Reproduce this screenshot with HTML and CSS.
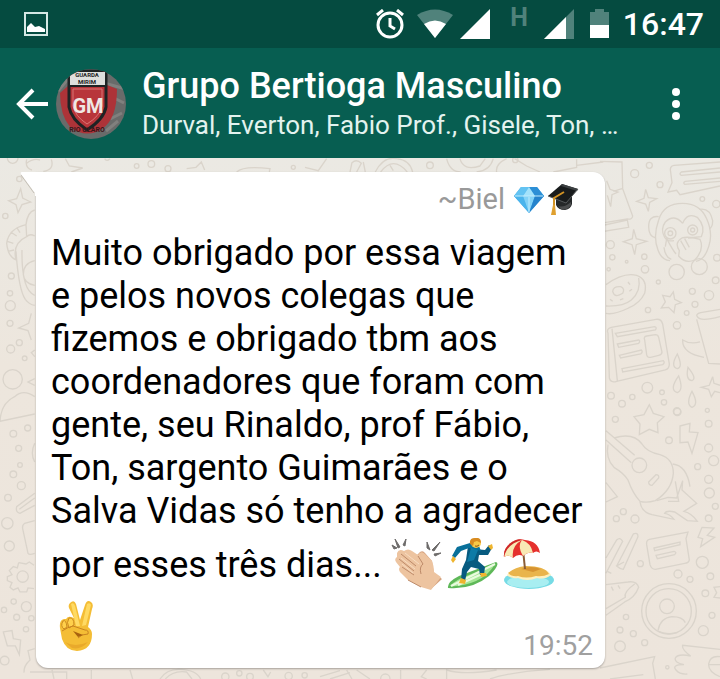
FILE: index.html
```html
<!DOCTYPE html>
<html lang="pt-BR">
<head>
    <meta charset="UTF-8">
    <meta name="viewport" content="width=device-width, initial-scale=1.0">
    <title>Grupo Bertioga Masculino</title>
    <link rel="stylesheet" href="styles.css">
</head>
<body>
    <div class="status-bar">
        <svg class="picture-icon" width="24" height="24" viewBox="0 0 24 24">
            <rect x="1" y="1" width="22" height="22" fill="none" stroke="#d5e8e4" stroke-width="2"/>
            <path d="M3 20V15L7 11L11 15L15 14L21 17V20Z" fill="#fff"/>
        </svg>
        <div class="status-icons">
            <svg width="28" height="30" viewBox="0 0 28 30">
                <circle cx="14" cy="16" r="12" fill="none" stroke="#fff" stroke-width="3"/>
                <path d="M14 9V17L19 20M1 6L7 1M27 6L21 1" fill="none" stroke="#fff" stroke-width="3"/>
            </svg>
            <svg class="wifi" width="36" height="30" viewBox="0 0 36 30">
                <path d="M18 29L0 6Q18-5 36 6Z" fill="#50827b"/>
                <path d="M18 29L7 15Q18 8 29 15Z" fill="#fff"/>
            </svg>
            <svg class="signal" width="30" height="30" viewBox="0 0 30 30">
                <path d="M0 30L30 0V30Z" fill="#fff"/>
            </svg>
            <span class="network">H</span>
            <svg class="signal-two" width="30" height="30" viewBox="0 0 30 30">
                <path d="M0 30L30 0V30Z" fill="#50827b"/>
                <path d="M0 30L22 8V30Z" fill="#fff"/>
            </svg>
            <svg class="battery" width="19" height="30" viewBox="0 0 19 30">
                <path d="M0 3H5V0H14V3H19V17H0Z" fill="#50827b"/>
                <path d="M0 16H19V29H0Z" fill="#fff"/>
            </svg>
            <span class="clock">16:47</span>
        </div>
    </div>

    <header class="chat-header">
        <button class="back-btn" aria-label="Voltar">
            <svg width="32" height="32" viewBox="0 0 32 32">
                <path d="M32 16H3M17 2L3 16L17 30" fill="none" stroke="#fff" stroke-width="4"/>
            </svg>
        </button>
        <svg class="avatar" width="70" height="70" viewBox="0 0 70 70">
            <defs>
                <clipPath id="avatarClip"><circle cx="35" cy="35" r="35"/></clipPath>
            </defs>
            <g clip-path="url(#avatarClip)">
                <rect width="70" height="70" fill="#696b6a"/>
                <path d="M48 14L70 20M52 26L68 34M54 50L66 44M2 22L12 10M50 62L62 52" stroke="#80807e" stroke-width="3"/>
                <path d="M4 24L13 16V38L30 61L51 38V16L61 20Q61 50 46 60Q30 70 14 58Q4 46 4 24Z" fill="#ad3338"/>
                <path d="M13 2H50V38Q48 50 31 61Q15 50 13 38Z" fill="#b8353a" stroke="#1e2324" stroke-width="3"/>
                <path d="M14 3H49V16H14Z" fill="#dedfdd"/>
                <path d="M13 17H50" stroke="#1e2324" stroke-width="2"/>
                <path d="M17 20H46V37Q44 47 31 55Q19 47 17 37Z" fill="none" stroke="#d97574" stroke-width="1"/>
                <text class="crest-top" x="31" y="8">GUARDA</text>
                <text class="crest-top" x="31" y="15">MIRIM</text>
                <text class="crest-main" x="32" y="44">GM</text>
                <text class="crest-bottom" x="31" y="63">RIO CLARO</text>
            </g>
        </svg>
        <div class="chat-title">
            <h1>Grupo Bertioga Masculino</h1>
            <p>Durval, Everton, Fabio Prof., Gisele, Ton, …</p>
        </div>
        <button class="menu-btn" aria-label="Mais opções">
            <svg width="8" height="32" viewBox="0 0 8 32">
                <circle cx="4" cy="4" r="4" fill="#fff"/>
                <circle cx="4" cy="16" r="4" fill="#fff"/>
                <circle cx="4" cy="28" r="4" fill="#fff"/>
            </svg>
        </button>
    </header>

    <main class="chat">
        <svg class="wallpaper" viewBox="0 158 720 521" preserveAspectRatio="xMaxYMin slice" aria-hidden="true">
            <!-- right side, upper half -->
            <g transform="translate(600 150) scale(0.3333)">
                <path d="M0 34L66 36L68 116L98 198Q96 210 82 207L0 220M20 92L30 118L54 126L36 134L32 170L22 136M0 228L82 210L86 232L0 246M66 116L40 124"/>
                <circle cx="148" cy="46" r="9"/><circle cx="104" cy="71" r="12"/><circle cx="180" cy="104" r="9"/>
                <circle cx="307" cy="147" r="7"/><circle cx="349" cy="162" r="11"/>
                <path d="M360 36L222 46Q208 48 212 66L216 98L204 126L230 121L240 134L360 108M360 54L244 66Q236 72 244 76L360 66M360 84L256 94Q248 98 254 103L360 94"/>
                <path d="M137 118L145 143L170 146L149 157L145 184L137 162L110 154L132 145Z"/>
                <path d="M101 238L109 266L140 274L109 284L104 314L96 284L70 275L97 266Z"/>
                <circle cx="31" cy="284" r="12"/><circle cx="37" cy="322" r="8"/><circle cx="133" cy="320" r="8"/><circle cx="135" cy="358" r="11"/>
                <circle cx="80" cy="335" r="4"/><circle cx="26" cy="358" r="5"/><circle cx="175" cy="396" r="6"/>
                <!-- monkey -->
                <path d="M176 210Q190 160 248 160Q300 160 320 206Q340 250 326 290Q314 330 288 334M176 210Q158 260 174 300Q184 330 210 332"/>
                <path d="M176 200Q146 196 146 230Q146 260 168 264M298 178Q330 172 338 212Q338 232 328 236"/>
                <path d="M248 220Q222 190 196 216Q180 238 194 262Q204 276 222 272M248 220Q262 186 292 202Q318 230 304 260L264 264"/>
                <circle cx="211" cy="250" r="17"/><circle cx="211" cy="250" r="7"/><circle cx="278" cy="240" r="15"/><circle cx="278" cy="240" r="6"/>
                <path d="M196 290L200 266Q218 300 228 312M238 302Q222 278 246 264Q264 258 300 268Q314 300 284 330Q256 342 236 318ZM242 272L258 300M254 266L268 292M192 292Q194 320 214 328"/>
                <circle cx="230" cy="366" r="23"/><circle cx="298" cy="350" r="24"/>
                <!-- donut -->
                <path d="M18 404Q70 366 110 376Q144 388 134 430Q120 460 86 474Q40 496 18 490M18 468Q70 470 94 450Q124 424 116 384M38 424Q40 408 62 410Q76 416 68 430Q44 446 38 424ZM84 396L90 404M96 418L88 424M70 446L60 450M30 448L38 454"/>
                <path d="M220 426L224 448L244 458L226 464L222 488L206 472L184 474L196 456L188 436L210 440Z"/>
                <circle cx="277" cy="424" r="9"/><circle cx="327" cy="436" r="14"/><circle cx="285" cy="463" r="9"/><circle cx="260" cy="489" r="7"/><circle cx="144" cy="480" r="8"/><circle cx="231" cy="526" r="11"/><circle cx="351" cy="323" r="10"/><circle cx="347" cy="391" r="10"/>
                <!-- newspaper -->
                <path d="M24 550Q18 536 34 532L168 508Q184 506 188 522L208 642Q208 656 196 660L50 694Q32 700 28 684ZM36 536L52 692M46 550L164 530Q172 532 166 540L52 560ZM52 582L116 570Q122 572 116 580L56 592ZM58 616L124 600Q130 606 122 612L62 624ZM66 656L190 632Q196 638 188 644L68 666ZM134 570Q130 560 140 558L166 554Q174 554 176 562L186 606Q186 614 176 616L152 622Q142 624 140 614Z"/>
                <path d="M292 500Q286 492 302 488L360 478M292 500Q300 516 360 500M290 508L326 640L360 642M300 576Q270 584 248 570Q246 610 312 622"/>
                <path d="M232 612Q210 650 232 656Q250 652 232 612ZM264 652Q256 690 276 692Q292 686 264 652ZM236 678Q206 720 232 728Q252 720 236 678ZM276 724Q256 762 276 772Q298 764 276 724Z"/>
                <path d="M338 680L342 700L360 706M338 680L328 706L304 712L326 718L334 740L344 724L360 728"/>
                <circle cx="142" cy="713" r="16"/><circle cx="186" cy="727" r="7"/><circle cx="33" cy="737" r="10"/><circle cx="97" cy="741" r="8"/><circle cx="66" cy="761" r="10"/><circle cx="192" cy="757" r="8"/><circle cx="231" cy="784" r="11"/><circle cx="322" cy="781" r="6"/>
            </g>
            <!-- right side, lower half -->
            <g transform="translate(600 410) scale(0.3333)">
                <path d="M148-16L160 10L192 20L172 38L174 68L148 58L118 74L120 42L102 20L132 14Z"/>
                <path d="M240 48L270 40L268 66L294 68L276 130L264 96L240 98Z"/>
                <circle cx="46" cy="28" r="9"/><circle cx="232" cy="6" r="11"/><circle cx="207" cy="91" r="10"/><circle cx="326" cy="41" r="10"/><circle cx="326" cy="114" r="12"/><circle cx="341" cy="152" r="15"/><circle cx="293" cy="170" r="9"/><circle cx="326" cy="208" r="12"/><circle cx="328" cy="249" r="15"/><circle cx="346" cy="289" r="9"/><circle cx="326" cy="325" r="10"/>
                <!-- guitar -->
                <path d="M18 62L104 136M18 90L94 158M42 84Q100 66 126 102Q140 126 180 134Q220 146 220 190Q216 240 166 272Q140 280 120 274Q98 250 84 210Q72 190 42 172Q16 146 24 104M146 216L168 194Q178 194 176 204L156 226Q146 226 146 216Z"/>
                <circle cx="118" cy="166" r="22"/>
                <path d="M218 162Q260 166 270 230M120 276Q124 306 156 314L222 328Q210 312 194 310Q200 300 224 306L262 332L292 334Q276 310 252 304L290 280L246 240L248 212L230 264L204 262L170 272M226 214L236 274L204 274"/>
                <path d="M18 218L52 260L18 276"/>
                <circle cx="70" cy="305" r="9"/><circle cx="49" cy="326" r="9"/><circle cx="105" cy="327" r="12"/>
                <path d="M18 490L68 394Q60 380 50 390L18 444M22 484L34 490M50 468L100 372Q114 366 114 380L70 478Q58 476 50 468L72 456"/>
                <path d="M148 388L264 366L258 386L268 450Q266 460 254 460L166 478Q154 478 150 464L140 404Q138 390 148 388ZM162 414L240 396V404L164 422ZM168 436L222 424Q232 426 224 434L172 446Z"/>
                <path d="M306 352L342 354L322 376L344 382L302 410L308 386L294 382Z"/>
                <circle cx="307" cy="457" r="18"/><circle cx="121" cy="461" r="9"/><circle cx="234" cy="492" r="12"/><circle cx="270" cy="508" r="9"/><circle cx="331" cy="499" r="10"/><circle cx="316" cy="550" r="10"/><circle cx="336" cy="616" r="9"/><circle cx="310" cy="662" r="15"/>
                <path d="M18 524L84 516Q110 512 116 532Q104 564 74 576L18 616M18 596L76 562Q70 546 104 522M34 530L40 542M54 526L60 536"/>
                <path d="M360 530L342 532L350 548L342 562L360 564"/>
                <!-- contact -->
                <circle cx="207" cy="603" r="82"/><circle cx="206" cy="604" r="68"/><circle cx="201" cy="589" r="22"/>
                <path d="M174 662Q180 624 216 620Q248 620 256 638M176 664Q200 676 232 668"/>
                <circle cx="78" cy="621" r="8"/><circle cx="60" cy="660" r="9"/><circle cx="100" cy="671" r="9"/><circle cx="60" cy="709" r="16"/><circle cx="134" cy="698" r="9"/><circle cx="202" cy="772" r="5"/>
                <path d="M0 774L164 740L158 760L166 807M30 807L130 794M360 718L248 706Q244 718 272 738Q234 730 226 744Q222 758 252 764Q214 764 228 780Q240 794 262 792M360 740Q330 736 326 762Q324 786 360 800M326 764H360"/>
            </g>
            <!-- left side -->
            <g transform="translate(0 150) scale(0.3333)">
                <circle cx="38" cy="24" r="16"/><circle cx="58" cy="87" r="8"/><circle cx="16" cy="198" r="8"/><circle cx="34" cy="378" r="9"/><circle cx="30" cy="430" r="8"/><circle cx="31" cy="467" r="15"/><circle cx="30" cy="520" r="9"/><circle cx="58" cy="578" r="9"/><circle cx="32" cy="597" r="12"/><circle cx="74" cy="625" r="7"/>
                <path d="M80 28Q74 54 96 60M154 28Q164 60 130 64M80 40Q100 24 120 30"/>
                <path d="M62 116L68 144L92 156L66 164L54 188L48 164L26 152L50 146Z"/>
                <path d="M104 180Q82 186 78 224Q26 236 20 280Q24 320 48 330Q36 280 80 260L78 224M32 246L50 258M22 274L40 280M24 304L42 300M50 232L60 248M48 304Q56 420 76 448Q88 464 104 466M66 300Q64 420 104 436M80 260Q90 250 104 258M104 332Q70 340 70 374Q72 400 104 406"/>
                <path d="M94 490L86 520L56 534L84 542L94 570M104 600L94 608L104 620"/>
                <circle cx="38" cy="688" r="29"/>
                <path d="M0 816Q2 760 44 740Q70 716 104 740M0 814L104 792M104 686L84 696L104 706"/>
                <circle cx="83" cy="834" r="9"/><circle cx="40" cy="851" r="10"/><circle cx="56" cy="895" r="9"/><circle cx="60" cy="945" r="7"/><circle cx="40" cy="973" r="10"/><circle cx="64" cy="1007" r="12"/><circle cx="24" cy="1043" r="10"/><circle cx="22" cy="1120" r="17"/><circle cx="28" cy="1188" r="15"/>
                <path d="M104 1030L50 1070Q46 1088 60 1090L104 1066M104 1044L58 1078M104 1112L74 1120Q66 1126 68 1136L84 1210Q88 1216 104 1210M104 880Q90 910 104 936"/>
                <!-- gear -->
                <path d="M56 1238L78 1242L88 1236L102 1246M56 1238L52 1254L40 1250L28 1262L36 1274L22 1280V1292L36 1298L30 1312L40 1320L54 1314L60 1326H80L84 1314L102 1316"/>
                <circle cx="68" cy="1280" r="17"/>
                <circle cx="41" cy="1355" r="8"/><circle cx="12" cy="1380" r="8"/><circle cx="79" cy="1370" r="15"/><circle cx="50" cy="1402" r="9"/><circle cx="94" cy="1405" r="8"/><circle cx="78" cy="1438" r="8"/><circle cx="14" cy="1532" r="13"/>
                <path d="M10 1446L36 1442L40 1466L62 1470L58 1514L46 1488H22ZM104 1496L84 1502L90 1530Q70 1548 72 1568"/>
            </g>
            <!-- strip over the bubble -->
            <g transform="translate(10 154) scale(0.3333)">
                <path d="M166 14L178 36L218 42L184 54M530 44L558 40L574 24L584 48M680 54Q700 34 780 44L778 54M284 14Q290 24 300 14"/>
                <circle cx="380" cy="36" r="7"/><circle cx="424" cy="30" r="10"/><circle cx="474" cy="44" r="9"/><circle cx="850" cy="40" r="6"/>
                <path d="M885 40L925 50L950 14M1020 54L1026 26Q1040 14 1054 28L1040 54M1060 24L1066 54M1096 54Q1120 6 1160 14Q1200 18 1208 54M1112 54Q1150 4 1192 54M1140 34L1150 50M1310 14Q1320 54 1352 54M1350 14Q1360 52 1410 36L1426 14M1450 14Q1440 50 1400 54M1460 54Q1456 30 1490 14M1514 14L1550 36L1590 54M1630 54L1700 40V16M1700 34L1780 24"/>
                <circle cx="1260" cy="34" r="10"/><circle cx="1516" cy="18" r="8"/>
            </g>
            <!-- strip under the bubble -->
            <g transform="translate(30 660) scale(0.3333)">
                <path d="M66 30L72 57M0 36H110V57M184 30V57M300 30L308 57M390 57Q410 26 450 28Q500 30 512 57M406 57Q430 30 470 36L486 57M700 30L714 50L722 36M870 50L930 32M900 57L960 38M950 30L966 57M980 30L1020 57M1112 30V57M1190 30L1174 50L1190 57M1250 57V30Q1300 46 1400 30M1380 57Q1440 36 1560 28"/>
                <circle cx="586" cy="50" r="11"/><circle cx="628" cy="40" r="8"/><circle cx="660" cy="50" r="10"/><circle cx="776" cy="48" r="11"/><circle cx="824" cy="46" r="8"/><circle cx="1066" cy="56" r="14"/>
            </g>
        </svg>

        <article class="bubble">
            <svg class="tail" width="16" height="24" viewBox="0 0 16 24">
                <path d="M16 0H2Q0 0 1 2L15 21V24H16Z" fill="#fff"/>
                <path d="M1 3L14 21" stroke="#c4bfb6" stroke-width="1"/>
            </svg>
            <div class="sender">
                <span>~Biel</span>
                <svg width="32" height="32" viewBox="0 0 32 32" role="img" aria-label="Diamante">
                    <path d="M8 4H24L31 13L16 30L1 13Z" fill="#3aa5e4"/>
                    <path d="M8 4L1 13H10L16 4Z" fill="#63c3f2"/>
                    <path d="M24 4L31 13H22L16 4Z" fill="#2c8fd6"/>
                    <path d="M16 4L10 13H22Z" fill="#a3e2fb"/>
                    <path d="M1 13H10L16 30Z" fill="#4ab4ec"/>
                    <path d="M10 13H22L16 30Z" fill="#82d2f7"/>
                    <path d="M22 13H31L16 30Z" fill="#2583cc"/>
                    <path d="M16 14V29M2 13H30" stroke="#c1ecfc" stroke-width="1"/>
                </svg>
                <svg width="32" height="32" viewBox="0 0 32 32" role="img" aria-label="Capelo">
                    <path d="M9 14V22Q11 27 18 27Q24 26 25 21V14Z" fill="#252829"/>
                    <path d="M11 23Q17 25 24 19V22Q20 28 14 26Z" fill="#4b4d4e"/>
                    <path d="M15 1L31 6L19 20L1 13Z" fill="#181b1c"/>
                    <path d="M15 1L31 6L30 8L14 3Z" fill="#3c4042"/>
                    <path d="M1 13L19 20L31 6" fill="none" stroke="#54585a" stroke-width="1"/>
                    <path d="M17 9L7 15V24" fill="none" stroke="#d29325" stroke-width="2"/>
                    <path d="M6 22H8L9 32H4Z" fill="#dfa02f"/>
                </svg>
            </div>
            <div class="message">
                <p class="message-text">
                    Muito obrigado por essa viagem e pelos novos colegas que fizemos e obrigado tbm aos coordenadores que foram com gente, seu Rinaldo, prof Fábio, Ton, sargento Guimarães e o Salva Vidas só tenho a agradecer por esses três dias...
                    <svg class="emoji" viewBox="0 0 52 52" role="img" aria-label="Palmas">
                        <path d="M1 7L6 10L3 11ZM4 1L9 9L7 10ZM15 1L14 8L12 7ZM36 4L39 12L36 10ZM49 4L43 13L41 12ZM50 15L43 16L44 18Z" fill="#6d6b6a" stroke="#6d6b6a" stroke-width="1"/>
                        <path d="M23 20L29 14Q32 12 34 15L41 23L43 35L51 41L40 51L26 38Z" fill="#d6a27e"/>
                        <path d="M6 15Q8 10 13 13Q17 10 21 13L27 17Q30 12 34 16L41 23Q43 28 43 34L50 39L40 52L30 49L17 42L9 34Q7 31 9 29L5 24Q3 21 6 19Z" fill="#edc4a0"/>
                        <path d="M10 16L25 28M8 21L23 33M11 29L23 37M27 18L32 26Q28 29 30 36M17 42L30 49" fill="none" stroke="#bd8a69" stroke-width="1"/>
                        <path d="M14 15L28 26M10 20L24 31M11 26L22 35" stroke="#f8dcc1" stroke-width="1"/>
                    </svg><svg class="emoji" viewBox="0 0 52 52" role="img" aria-label="Surfista">
                        <path d="M1 50Q0 44 12 38L49 24Q54 26 42 38Q25 52 1 50Z" fill="#5eb858"/>
                        <path d="M3 48Q8 42 22 37L48 26Q42 37 29 43Q15 49 3 48Z" fill="#a5e695"/>
                        <path d="M4 48L48 26M11 47L35 36" stroke="#eafbdf" stroke-width="2"/>
                        <path d="M19 22L21 8L25 9L28 11L38 12L42 7L45 10L41 17L32 17L31 23L38 29L37 37L33 37L32 31L24 29L20 34L18 43L14 42L15 31Z" fill="#075b80"/>
                        <path d="M22 10L14 13L8 20L5 18L10 9L23 5L32 8L34 13Z" fill="#08709a"/>
                        <path d="M24 10L31 12L27 22L20 24Z" fill="#0d7ba6"/>
                        <path d="M6 18L9 21L6 25L4 22ZM41 8L45 6L46 10L44 12ZM14 40L19 42L18 46L12 45ZM33 35L39 35L40 38L34 39Z" fill="#efb52e"/>
                        <circle cx="29" cy="5" r="5" fill="#f7c948"/>
                        <path d="M23 6Q22 0 28 0Q34-1 34 5L30 3L27 4L26 8Z" fill="#d88b21"/>
                        <path d="M28 8Q30 9 32 7" stroke="#8a5514" stroke-width="1" fill="none"/>
                    </svg><svg class="emoji" viewBox="0 0 52 52" role="img" aria-label="Praia">
                        <ellipse cx="26" cy="42" rx="25" ry="9" fill="#76dbe5"/>
                        <ellipse cx="25" cy="44" rx="21" ry="6" fill="#a8eef1"/>
                        <path d="M4 37Q10 30 22 29Q44 28 48 37Q42 42 34 40Q24 44 15 40Q7 41 4 37Z" fill="#fff0bd"/>
                        <path d="M5 35Q12 29 23 28Q42 28 46 36Q40 39 33 38Q23 41 15 38Q9 39 5 35Z" fill="#e9b44b"/>
                        <path d="M18 31Q28 27 38 31L30 34Z" fill="#d79431"/>
                        <path d="M19 2L22 31" stroke="#8b5d36" stroke-width="2"/>
                        <path d="M1 19Q0 10 9 4Q15 0 22 2Q35 3 37 15Q33 12 30 15Q25 13 20 18Q15 15 10 20Q6 16 1 19Z" fill="#e5302d"/>
                        <path d="M19 2Q8 8 10 20Q6 16 1 19Q1 10 9 4Q14 1 19 2ZM19 2Q14 8 20 18Q25 13 30 15Q28 5 19 2Z" fill="#f8e9b4"/>
                        <path d="M9 4Q15 0 19 2Q4 6 1 19Q0 10 9 4Z" fill="#cf2729"/>
                    </svg><svg class="emoji" viewBox="0 0 52 52" role="img" aria-label="Paz">
                        <path d="M19 3Q23-1 25 4L29 20L34 5Q36-1 40 2Q43 4 41 9L37 27Q41 30 41 34Q41 50 26 51Q15 51 11 39L9 28Q8 20 13 19L15 19Q17 16 20 17L23 18L18 8Q17 5 19 3Z" fill="#f4bd35"/>
                        <path d="M20 4Q23 2 24 6L29 26H25ZM36 4Q39 2 40 5L35 25L31 26Z" fill="#ffda63"/>
                        <path d="M12 21Q15 19 16 27L13 29Q9 26 12 21ZM18 18Q23 17 23 25L18 28Q15 22 18 18Z" fill="#ffd04c" stroke="#cb8a20" stroke-width="1"/>
                        <path d="M11 31Q17 27 22 26L34 30Q38 30 37 34Q30 34 27 38" fill="none" stroke="#c98320" stroke-width="1"/>
                        <path d="M22 31L32 35L27 37Z" fill="#a8620f"/>
                        <path d="M14 42Q24 48 37 42Q30 50 21 48Z" fill="#e9a92b"/>
                    </svg>
                </p>
                <time class="message-time">19:52</time>
            </div>
        </article>
    </main>
</body>
</html>
```
FILE: styles.css
```css
* {
    box-sizing: border-box;
}
body {
    margin: 0;
    min-height: 100vh;
    display: flex;
    flex-direction: column;
    font-family: Roboto, "Liberation Sans", sans-serif;
    background: #ede5dc;
    color: #000;
}
h1, p {
    margin: 0;
}
button {
    display: flex;
    align-items: center;
    justify-content: center;
    padding: 0;
    border: none;
    background: none;
    cursor: pointer;
}
svg {
    flex-shrink: 0;
}
.status-bar {
    display: flex;
    align-items: center;
    justify-content: space-between;
    height: 48px;
    padding: 0 16px 0 24px;
    background: #054b40;
    color: #fff;
}
.status-icons {
    display: flex;
    align-items: center;
}
.wifi {
    margin-left: 13px;
}
.signal {
    margin-left: 7px;
}
.network {
    align-self: flex-start;
    margin-left: 20px;
    font-size: 25px;
    font-weight: 700;
    line-height: 26px;
    color: #50827b;
}
.signal-two, .battery {
    margin-left: 16px;
}
.clock {
    margin-left: 14px;
    font-size: 32px;
    font-weight: 500;
}
.chat-header {
    display: flex;
    align-items: center;
    height: 110px;
    padding: 2px 16px 0 12px;
    background: #075e51;
    color: #fff;
}
.back-btn {
    width: 40px;
    height: 64px;
}
.avatar {
    margin-left: 4px;
}
.crest-top, .crest-main, .crest-bottom {
    font-family: "Liberation Sans Narrow", Roboto, sans-serif;
    font-weight: 700;
    text-anchor: middle;
}
.crest-top {
    font-size: 6px;
    fill: #1e2324;
}
.crest-main {
    font-size: 20px;
    fill: #f0e8e4;
}
.crest-bottom {
    font-size: 7px;
    fill: #3c1418;
}
.chat-title {
    flex: 1;
    min-width: 0;
    margin-left: 16px;
    white-space: nowrap;
}
.chat-title h1 {
    font-size: 36px;
    font-weight: 500;
    line-height: 42px;
}
.chat-title p {
    font-size: 26px;
    line-height: 36px;
    color: #e3f3ef;
}
.menu-btn {
    width: 56px;
    height: 64px;
}
.chat {
    position: relative;
    flex: 1;
    padding: 14px 115px 11px 36px;
    background: linear-gradient(#ebe9e3, #ede6dd 40%, #ede5dc);
}
.wallpaper {
    position: absolute;
    inset: 0;
    width: 100%;
    height: 100%;
    fill: none;
    stroke: #dad4cb;
    stroke-width: 4;
}
.bubble {
    position: relative;
    padding: 8px 12px 8px 15px;
    background: #fff;
    border-radius: 0 12px 12px 12px;
    box-shadow: 0 1px 2px rgba(0, 0, 0, 0.3);
}
.tail {
    position: absolute;
    top: 0;
    right: 100%;
}
.sender {
    display: flex;
    align-items: center;
    justify-content: flex-end;
    gap: 2px;
    height: 38px;
    padding-right: 14px;
    font-size: 29px;
    color: #999;
}
.sender span {
    margin-right: 6px;
}
.message {
    display: grid;
    padding-top: 14px;
}
.message-text {
    grid-area: 1 / 1;
    padding-bottom: 3px;
    font-size: 36px;
    line-height: 43px;
}
.emoji {
    width: 52px;
    height: 52px;
    margin: 5px 4px 5px 0;
    vertical-align: -18px;
}
.message-time {
    grid-area: 1 / 1;
    align-self: end;
    justify-self: end;
    font-size: 28px;
    line-height: 28px;
    color: #a0a0a0;
}
```
